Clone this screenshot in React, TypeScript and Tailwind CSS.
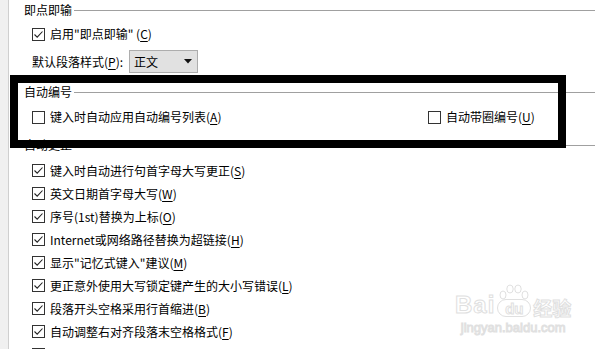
import React from 'react'

const font = "font-['Noto_Sans_CJK_SC','Noto_Sans',sans-serif]"

const Box = ({ checked }: { checked?: boolean }) => (
  <span className="flex h-[13px] w-[13px] shrink-0 items-center justify-center border border-[#333] bg-white">
    {checked && (
      <svg width="11" height="11" viewBox="0 0 11 11">
        <polyline points="1.5,5.5 4.2,8.2 9.5,2.5" fill="none" stroke="#222" strokeWidth="1.1" />
      </svg>
    )}
  </span>
)

const Label = ({ text, k, tail = '' }: { text: string; k: string; tail?: string }) => (
  <span className="whitespace-nowrap">
    {text}(<span className="underline underline-offset-2">{k}</span>){tail}
  </span>
)

const Check = ({ text, k, checked = true }: { text: string; k: string; checked?: boolean }) => (
  <div className="flex h-[23px] items-center gap-[5px] pl-[8px]">
    <Box checked={checked} />
    <Label text={text} k={k} />
  </div>
)

const Header = ({ title, className = '' }: { title: string; className?: string }) => (
  <div className={`flex h-[20px] items-center ${className}`}>
    <span className="whitespace-nowrap">{title}</span>
    <span className="ml-[2px] h-px flex-1 bg-[#a0a0a0]" />
  </div>
)

const corrections: [string, string][] = [
  ['键入时自动进行句首字母大写更正', 'S'],
  ['英文日期首字母大写', 'W'],
  ['序号(1st)替换为上标', 'O'],
  ['Internet或网络路径替换为超链接', 'H'],
  ['显示"记忆式键入"建议', 'M'],
  ['更正意外使用大写锁定键产生的大小写错误', 'L'],
  ['段落开头空格采用行首缩进', 'B'],
  ['自动调整右对齐段落末空格格式', 'F'],
  ['自动', 'X'],
]

export default function App() {
  return (
    <div className={`relative flex h-[349px] w-[595px] overflow-hidden bg-white text-[12px] leading-none text-black ${font}`}>
      <div className="w-[9px] shrink-0 border-r border-[#cfcfcf] bg-[#f0f0f0]" />
      <div className="flex-1 pl-[15px]">
        <Header title="即点即输" />
        <div className="mt-[4px] flex h-[20px] items-center gap-[5px] pl-[8px]">
          <Box checked />
          <span className="whitespace-nowrap">
            启用"即点即输" (<span className="underline underline-offset-2">C</span>)
          </span>
        </div>
        <div className="mt-[6px] flex h-[23px] items-center gap-[6px] pl-[8px]">
          <Label text="默认段落样式" k="P" tail=":" />
          <div className="flex h-[23px] w-[69px] items-center justify-between border border-[#adadad] bg-[#e1e1e1] pl-[4px] pr-[5px]">
            <span>正文</span>
            <svg width="8" height="5" viewBox="0 0 8 5">
              <polygon points="0,0 8,0 4,4.5" fill="#111" />
            </svg>
          </div>
        </div>

        <Header title="自动编号" className="mt-[9px]" />
        <div className="mt-[5px] flex h-[20px] items-center">
          <div className="flex w-[404px] shrink-0 items-center gap-[5px] pl-[8px]">
            <Box />
            <Label text="键入时自动应用自动编号列表" k="A" />
          </div>
          <div className="flex items-center gap-[5px]">
            <Box />
            <Label text="自动带圈编号" k="U" />
          </div>
        </div>

        <Header title="自动更正" className="mt-[8px]" />
        <div className="mt-[4px]">
          {corrections.map(([t, k]) => (
            <Check key={t} text={t} k={k} />
          ))}
        </div>
      </div>

      {/* annotation frame */}
      <div className="absolute left-[10px] top-[75px] h-[73px] w-[556px] border-[8px] border-black" />

      {/* watermark */}
      <div className="pointer-events-none absolute left-[455px] top-[284px] flex flex-col items-center text-white [-webkit-text-stroke:1px_#e0e0e0]">
        <div className="flex items-end font-['Liberation_Sans',sans-serif] font-bold">
          <span className="text-[24px] leading-none tracking-[1px]">Bai</span>
          <div className="relative ml-[2px] flex flex-col items-center">
            <svg width="32" height="16" viewBox="0 0 32 16" className="mb-[-1px]">
              <g fill="white" stroke="#e0e0e0" strokeWidth="1">
                <ellipse cx="5" cy="11" rx="3" ry="4" />
                <ellipse cx="12" cy="5" rx="3.2" ry="4" />
                <ellipse cx="20" cy="5" rx="3.2" ry="4" />
                <ellipse cx="27" cy="11" rx="3" ry="4" />
              </g>
            </svg>
            <div className="flex h-[18px] w-[34px] items-center justify-center rounded-[9px] border border-[#e0e0e0] text-[15px] leading-none">
              du
            </div>
          </div>
          <span className={`ml-[2px] text-[19px] leading-none ${font}`}>经验</span>
        </div>
        <span className="mt-[4px] font-['Liberation_Sans',sans-serif] text-[13px] leading-none">jingyan.baidu.com</span>
      </div>
    </div>
  )
}
